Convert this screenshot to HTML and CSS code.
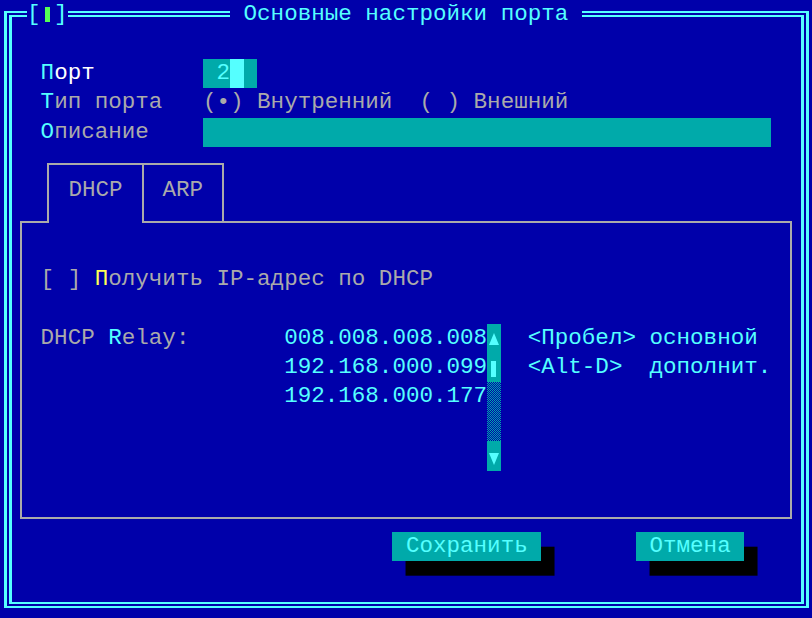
FILE: index.html
```html
<!DOCTYPE html>
<html lang="ru">
<head>
<meta charset="utf-8">
<title>Основные настройки порта</title>
<link rel="stylesheet" href="styles.css">
</head>
<body>
<div class="screen">
  <div class="frame"><div class="frame-inner"></div></div>
  <div class="close">[<span class="close-cell"><span class="close-mark"></span></span>]</div>
  <div class="title"> Основные настройки порта </div>

  <div class="txt lbl-port"><span class="hot">П</span>орт</div>
  <div class="field field-port"> 2<span class="cursor"></span> </div>

  <div class="txt grey lbl-type"><span class="hot">Т</span>ип порта</div>
  <div class="txt grey radio-int">(•) Внутренний</div>
  <div class="txt grey radio-ext">( ) Внешний</div>

  <div class="txt grey lbl-desc"><span class="hot">О</span>писание</div>
  <div class="field field-desc"></div>

  <div class="tabbox"></div>
  <div class="tab tab-dhcp">DHCP</div>
  <div class="tab tab-arp">ARP</div>

  <div class="txt grey chk">[ ] <span class="hot-y">П</span>олучить IP-адрес по DHCP</div>

  <div class="txt grey relay">DHCP <span class="hot">R</span>elay:</div>
  <div class="txt cyan ip ip1">008.008.008.008</div>
  <div class="txt cyan ip ip2">192.168.000.099</div>
  <div class="txt cyan ip ip3">192.168.000.177</div>

  <div class="scroll">
    <div class="sb-cell sb-up"><svg width="10" height="12" viewBox="0 0 10 12"><polygon points="5,0 10,12 0,12" fill="#55FFFF"/></svg></div>
    <div class="sb-cell sb-thumb"><span class="thumb-mark"></span></div>
    <div class="sb-cell sb-track"></div>
    <div class="sb-cell sb-track"></div>
    <div class="sb-cell sb-down"><svg width="10" height="12" viewBox="0 0 10 12"><polygon points="0,0 10,0 5,12" fill="#55FFFF"/></svg></div>
  </div>

  <div class="txt cyan help help1">&lt;Пробел&gt; основной</div>
  <div class="txt cyan help help2">&lt;Alt-D&gt;  дополнит.</div>

  <div class="btn btn-save"> Сохранить </div>
  <div class="btn btn-cancel"> Отмена </div>
</div>
</body>
</html>
```

FILE: styles.css
```css
html, body {
  margin: 0;
  padding: 0;
  background: #0000AA;
}

.screen {
  width: 812px;
  height: 618px;
  display: grid;
  grid-template-columns: repeat(60, 13.5333px);
  grid-template-rows: repeat(21, 29.4286px);
  background: #0000AA;
  font-family: "Liberation Mono", "DejaVu Sans Mono", monospace;
  font-size: 22.555px;
  line-height: 29.4286px;
  color: #AAAAAA;
  overflow: hidden;
}

.screen > * {
  white-space: pre;
  min-width: 0;
}

/* window double frame */
.frame {
  grid-column: 1 / -1;
  grid-row: 1 / -1;
  margin: 11px 3px 10px 4px;
  border: solid #55FFFF;
  border-width: 2px 3px;
  padding: 2px;
}
.frame-inner {
  height: 100%;
  box-sizing: border-box;
  border: solid #55FFFF;
  border-width: 2px 3px;
}

.close {
  grid-column: 3 / span 3;
  grid-row: 1;
  background: #0000AA;
  color: #55FFFF;
}
.close-cell {
  display: inline-block;
  width: 1ch;
  height: 29.4286px;
  vertical-align: top;
  position: relative;
}
.close-mark {
  display: block;
  width: 5px;
  height: 15px;
  margin: 7px auto 0;
  background: #55FF55;
}

.title {
  grid-column: 18 / span 26;
  grid-row: 1;
  background: #0000AA;
  color: #55FFFF;
}

.txt { grid-row: auto; }
.grey { color: #AAAAAA; }
.cyan { color: #55FFFF; }
.hot { color: #55FFFF; }
.hot-y { color: #FFFF55; }

.lbl-port { grid-column: 4 / span 8; grid-row: 3; color: #FFFFFF; }
.lbl-type { grid-column: 4 / span 10; grid-row: 4; }
.lbl-desc { grid-column: 4 / span 10; grid-row: 5; }

.field {
  background: #00AAAA;
  color: #55FFFF;
}
.field-port { grid-column: 16 / span 4; grid-row: 3; }
.field-desc { grid-column: 16 / span 42; grid-row: 5; }
.cursor {
  display: inline-block;
  width: 1ch;
  height: 29.4286px;
  vertical-align: top;
  background: #55FFFF;
}

.radio-int { grid-column: 16 / span 14; grid-row: 4; }
.radio-ext { grid-column: 32 / span 11; grid-row: 4; }

/* tabs */
.tabbox {
  grid-column: 2 / 60;
  grid-row: 8 / 19;
  margin: 15px 6px 11px 6px;
  border: 2px solid #AAAAAA;
}
.tab {
  grid-row: 6 / 9;
  margin-top: 16px;
  margin-bottom: 12.5px;
  border: 2px solid #AAAAAA;
  border-bottom: none;
  padding-top: 11.3px;
  text-align: center;
  color: #AAAAAA;
}
.tab-dhcp {
  grid-column: 4 / 12;
  margin-left: 6.7px;
  margin-right: 5.2px;
  background: #0000AA;
}
.tab-arp {
  grid-column: 11 / 18;
  margin-left: 6.4px;
  margin-right: 6.1px;
}

.chk { grid-column: 4 / span 30; grid-row: 10; }
.relay { grid-column: 4 / span 12; grid-row: 12; }

.ip { grid-column: 22 / span 15; }
.ip1 { grid-row: 12; }
.ip2 { grid-row: 13; }
.ip3 { grid-row: 14; }

.scroll {
  grid-column: 37;
  grid-row: 12 / 17;
  display: flex;
  flex-direction: column;
}
.sb-cell {
  height: 29.4286px;
  display: flex;
  justify-content: center;
  background: #00AAAA;
}
.sb-up { align-items: flex-start; padding-top: 9px; box-sizing: border-box; }
.sb-down { align-items: flex-end; padding-bottom: 6px; box-sizing: border-box; }
.sb-thumb { align-items: center; }
.thumb-mark {
  display: block;
  width: 5px;
  height: 16px;
  margin-top: 2px;
  background: #55FFFF;
}
.sb-track {
  background: repeating-conic-gradient(#00AAAA 0 25%, #0000AA 0 50%) 0 0 / 2px 2px;
}

.help { grid-column: 40 / span 19; }
.help1 { grid-row: 12; }
.help2 { grid-row: 13; }

.btn {
  grid-row: 19;
  background: #00AAAA;
  color: #55FFFF;
  margin-top: 2px;
  margin-bottom: -2px;
  box-shadow: 13.533px 14.7px 0 #000000;
}
.btn-save { grid-column: 30 / span 11; }
.btn-cancel { grid-column: 48 / span 8; }
```
